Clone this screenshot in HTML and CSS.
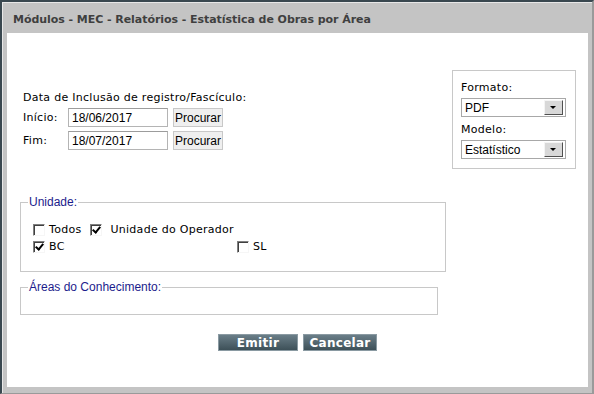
FILE: index.html
```html
<!DOCTYPE html>
<html lang="pt-BR">
<head>
  <meta charset="UTF-8" />
  <title>Estatística de Obras por Área</title>
  <link rel="stylesheet" href="styles.css">
</head>
<body>

  <div class="window">
    <div class="titlebar">Módulos - MEC - Relatórios - Estatística de Obras por Área</div>

    <div class="content">
      <div class="top">
        <!-- Periodo -->
        <div class="periodo">
          <p class="label">Data de Inclusão de registro/Fascículo:</p>
          <div class="row">
            <span class="row-label">Início:</span>
            <span class="input">18/06/2017</span>
            <span class="btn-small">Procurar</span>
          </div>
          <div class="row">
            <span class="row-label">Fim:</span>
            <span class="input">18/07/2017</span>
            <span class="btn-small">Procurar</span>
          </div>
        </div>

        <!-- Formato / Modelo -->
        <div class="opcoes">
          <p class="label">Formato:</p>
          <div class="select"><span>PDF</span><i class="arrow"></i></div>
          <p class="label">Modelo:</p>
          <div class="select"><span>Estatístico</span><i class="arrow"></i></div>
        </div>
      </div>

      <fieldset class="group unidade">
        <legend>Unidade:</legend>
        <div class="checks">
          <label class="check todos"><span class="box"></span>Todos</label>
          <label class="check operador"><span class="box checked"></span>Unidade do Operador</label>
        </div>
        <div class="checks">
          <label class="check bc"><span class="box checked"></span>BC</label>
          <label class="check"><span class="box"></span>SL</label>
        </div>
      </fieldset>

      <fieldset class="group areas">
        <legend>Áreas do Conhecimento:</legend>
      </fieldset>

      <div class="actions">
        <span class="btn emitir">Emitir</span>
        <span class="btn cancelar">Cancelar</span>
      </div>
    </div>
  </div>

</body>
</html>
```

FILE: styles.css
```css
/* Base */
body {
  margin: 0;
  font-family: "DejaVu Sans", Verdana, sans-serif;
  font-size: 11px;
  letter-spacing: 0.28px;
  color: #000;
  background: #fff;
}
p {
  margin: 0;
}

/* Window frame */
.window {
  width: 594px;
  height: 394px;
  box-sizing: border-box;
  background: #c4c4c4;
  border-top: 2px solid #3a4850;
  border-left: 2px solid #3a4850;
  border-right: 2px solid #9a9a9a;
  border-bottom: 1px solid #9a9a9a;
  padding: 0 4px 6px 0;
  display: flex;
  flex-direction: column;
  box-shadow: inset 1px 1px 0 #e8e8e8;
}
.titlebar {
  height: 31px;
  line-height: 35px;
  padding-left: 11px;
  font-weight: bold;
  font-size: 11px;
  letter-spacing: -0.05px;
  color: #3f3f3f;
}
.content {
  flex: 1;
  margin-left: 5px;
  background: #fff;
  padding: 37px 12px 0 13px;
}

/* Top area */
.top {
  display: flex;
  justify-content: space-between;
  align-items: flex-start;
}
.periodo {
  padding-top: 21px;
  padding-left: 3px;
}
.row {
  display: flex;
  align-items: center;
  margin-top: 4px;
}
.row-label {
  width: 45px;
}
.input {
  width: 95px;
  height: 17px;
  line-height: 19px;
  padding-left: 3px;
  border: 1px solid #b4b4b4;
  border-top-color: #9c9c9c;
  font-family: "Liberation Sans", Arial, sans-serif;
  font-size: 12px;
  letter-spacing: 0;
}
.btn-small {
  margin-left: 5px;
  height: 17px;
  line-height: 19px;
  padding: 0 1px;
  background: #efefef;
  border: 1px solid #c8c8c8;
  font-family: "Liberation Sans", Arial, sans-serif;
  font-size: 12px;
  letter-spacing: 0;
}

.opcoes {
  width: 114px;
  height: 87px;
  border: 1px solid #c8c8c8;
  padding: 10px 0 0 8px;
}
.opcoes .label {
  margin-bottom: 4px;
}
.select {
  width: 103px;
  height: 17px;
  border: 1px solid #a8a8a8;
  display: flex;
  align-items: center;
  justify-content: space-between;
  margin-bottom: 6px;
  font-family: "Liberation Sans", Arial, sans-serif;
  font-size: 12px;
  letter-spacing: 0;
}
.select span {
  padding-left: 3px;
}
.arrow {
  width: 17px;
  height: 13px;
  margin-right: 2px;
  background: #d8d8d8;
  border: 1px solid #f4f4f4;
  border-right-color: #505050;
  border-bottom-color: #505050;
  position: relative;
}
.arrow::after {
  content: "";
  position: absolute;
  left: 5px;
  top: 5px;
  border-left: 3px solid transparent;
  border-right: 3px solid transparent;
  border-top: 3px solid #000;
}

/* Fieldsets */
.group {
  margin: 0;
  border: 1px solid #c8c8c8;
  padding: 0 0 0 12px;
}
.group legend {
  color: #1c1c8c;
  font-family: "Liberation Sans", Arial, sans-serif;
  font-size: 12px;
  letter-spacing: 0;
  padding: 0 1px;
  margin-left: -5px;
}
.unidade {
  width: 412px;
  height: 63px;
  margin-top: 26px;
  padding-top: 12px;
}
.checks {
  display: flex;
  height: 17px;
  align-items: center;
}
.check {
  display: flex;
  align-items: center;
}
.check .box {
  margin-right: 4px;
}
.todos {
  margin-right: 9px;
}
.operador .box {
  margin-right: 8px;
}
.check.bc {
  width: 204px;
}
.box {
  width: 10px;
  height: 10px;
  border: 1px solid #f6f6f6;
  border-top-color: #808080;
  border-left-color: #808080;
  box-shadow: inset 1px 1px 0 #404040;
  position: relative;
}
.box.checked::after {
  content: "";
  position: absolute;
  left: 3px;
  top: 0;
  width: 3px;
  height: 6px;
  border-right: 2px solid #000;
  border-bottom: 2px solid #000;
  transform: rotate(40deg);
}
.areas {
  width: 404px;
  height: 33px;
  margin-top: 8px;
}

/* Buttons */
.actions {
  display: flex;
  gap: 5px;
  margin-top: 19px;
  padding-left: 198px;
}
.btn {
  height: 15px;
  line-height: 16px;
  text-align: center;
  color: #fff;
  font-weight: bold;
  font-size: 12px;
  background: linear-gradient(#6a7e88, #3d5058);
  border: 1px solid #8a9aa2;
}
.emitir {
  width: 78px;
}
.cancelar {
  width: 72px;
}
```
